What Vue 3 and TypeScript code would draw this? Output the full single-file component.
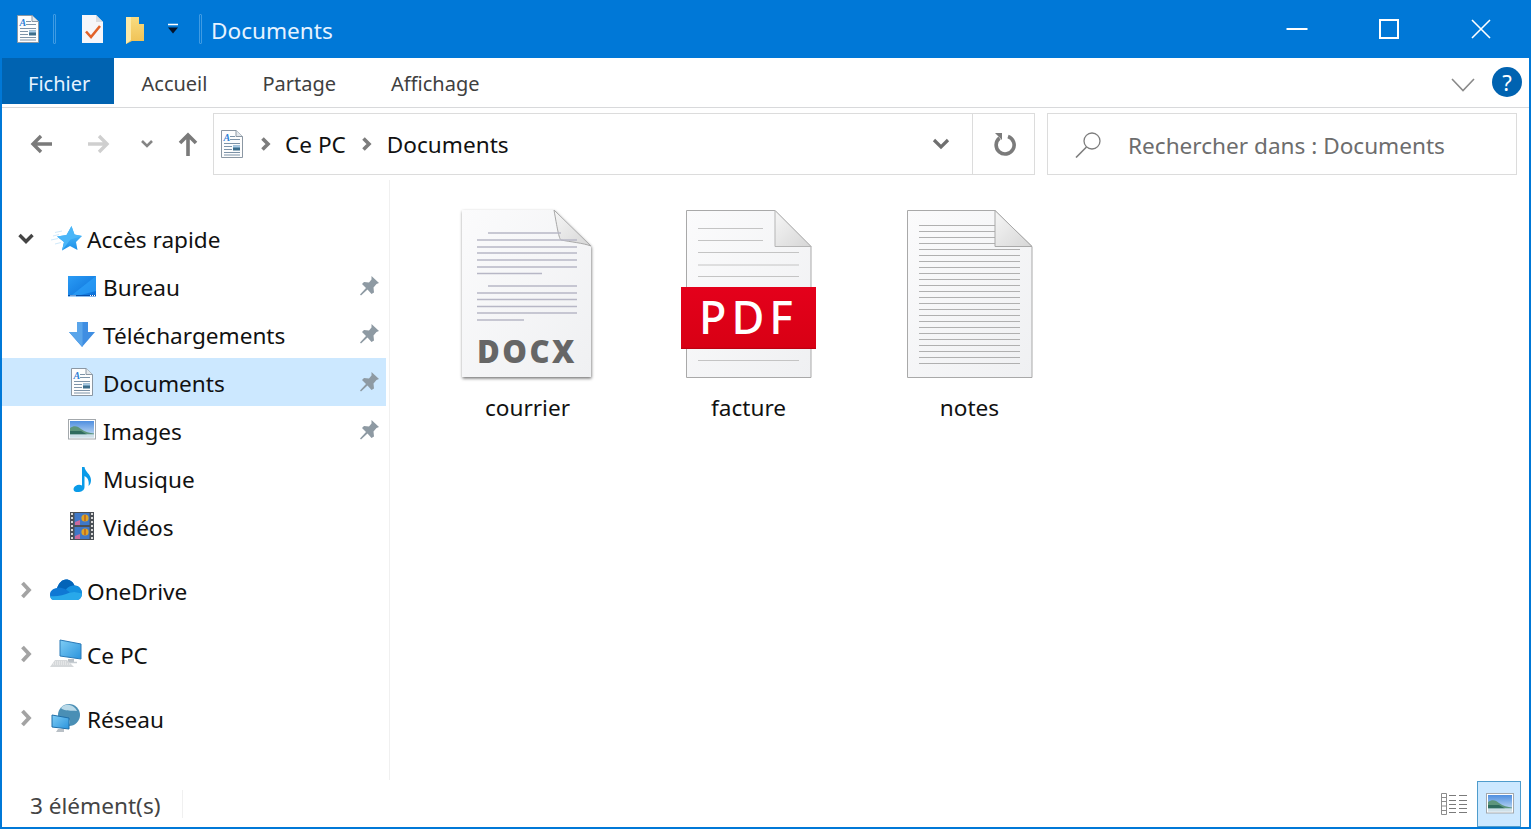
<script setup lang="ts">
interface TreeItem {
  label: string
  icon: string
  pinned?: boolean
  selected?: boolean
}

const quickAccess: TreeItem[] = [
  { label: 'Bureau', icon: 'i-desktop', pinned: true },
  { label: 'Téléchargements', icon: 'i-download', pinned: true },
  { label: 'Documents', icon: 'i-doc', pinned: true, selected: true },
  { label: 'Images', icon: 'i-picture', pinned: true },
  { label: 'Musique', icon: 'i-music' },
  { label: 'Vidéos', icon: 'i-video' },
]

const roots: TreeItem[] = [
  { label: 'OneDrive', icon: 'i-cloud' },
  { label: 'Ce PC', icon: 'i-pc' },
  { label: 'Réseau', icon: 'i-network' },
]

const tabs = ['Accueil', 'Partage', 'Affichage']

// ruled lines of the big file icons: [x1, x2, y]
const docxLines = [
  [30, 103, 28], [19, 119, 35], [19, 119, 42], [19, 119, 48], [19, 119, 55], [19, 119, 62], [19, 84, 68.5],
  [30, 119, 81], [19, 119, 88], [19, 119, 94.5], [19, 119, 101.5], [19, 119, 108], [19, 66, 115],
]
const pdfLines = [
  [19, 84, 23], [19, 84, 35], [19, 120, 47], [19, 120, 59.5], [19, 120, 71], [19, 120, 155],
]
const noteLines = Array.from({ length: 24 }, (_, i) => {
  return [19, i < 4 ? 95 : 120, 20 + i * 6]
})
</script>

<template>
  <div class="window">
    <!-- shared icons -->
    <svg class="defs" width="0" height="0" aria-hidden="true">
      <defs>
        <linearGradient id="g-star" x1="0" y1="0" x2="0" y2="1">
          <stop offset="0" stop-color="#5cc6ff" />
          <stop offset="1" stop-color="#1b8fe8" />
        </linearGradient>
        <linearGradient id="g-desk" x1="0" y1="0" x2="1" y2="1">
          <stop offset="0" stop-color="#2b9cf5" />
          <stop offset="1" stop-color="#0a6fd8" />
        </linearGradient>
        <linearGradient id="g-sky" x1="0" y1="0" x2="0" y2="1">
          <stop offset="0" stop-color="#4f8fe0" />
          <stop offset="1" stop-color="#cfe3f5" />
        </linearGradient>
        <linearGradient id="g-folder" x1="0" y1="0" x2="0" y2="1">
          <stop offset="0" stop-color="#f9dc80" />
          <stop offset="1" stop-color="#efc052" />
        </linearGradient>
        <linearGradient id="g-screen" x1="0" y1="0" x2="1" y2="1">
          <stop offset="0" stop-color="#7fcdf5" />
          <stop offset="1" stop-color="#2a93dc" />
        </linearGradient>
        <linearGradient id="g-page" x1="0" y1="0" x2="1" y2="1">
          <stop offset="0" stop-color="#fbfbfc" />
          <stop offset="1" stop-color="#eff0f2" />
        </linearGradient>
        <linearGradient id="g-fold" x1="0" y1="0" x2="1" y2="1">
          <stop offset="0" stop-color="#f6f6f6" />
          <stop offset="1" stop-color="#d6d6d6" />
        </linearGradient>
        <linearGradient id="g-red" x1="0" y1="0" x2="0" y2="1">
          <stop offset="0" stop-color="#e4001b" />
          <stop offset="0.97" stop-color="#d80014" />
          <stop offset="1" stop-color="#b5000f" />
        </linearGradient>
        <filter id="f-soft" x="-10%" y="-10%" width="120%" height="120%">
          <feDropShadow dx="0.5" dy="1.5" stdDeviation="1.5" flood-color="#000" flood-opacity="0.55" />
        </filter>

        <symbol id="i-doc" viewBox="0 0 30 30">
          <path d="M4.5 1.5H19L25.5 7.5V28.5H4.5Z" fill="#fdfdfd" stroke="#8b97a3" />
          <path d="M19 1.5V7.5H25.5" fill="#e4e8ec" stroke="#8b97a3" />
          <text x="6.5" y="11.5" class="doc-a">A</text>
          <path d="M13 7.5H18M13 10.5H23M7 14.5H23M7 17.5H15M7 20.5H15M7 23.5H23M7 26H23" stroke="#7d93a8" fill="none" />
          <rect x="16" y="16.5" width="7" height="5" fill="#3d6e8c" />
          <rect x="16" y="16.5" width="7" height="2" fill="#a9cbe6" />
        </symbol>

        <symbol id="i-check" viewBox="0 0 30 30">
          <path d="M4 1H18L25 8V29H4Z" fill="#f6f6fa" />
          <path d="M18 1V8H25Z" fill="#dadbe0" />
          <path d="M8 17.5L13 23L22 12" fill="none" stroke="#e2622a" stroke-width="2.6" />
        </symbol>

        <symbol id="i-qfolder" viewBox="0 0 30 30">
          <path d="M6 3H19V10H24V27H12L6 30Z" fill="url(#g-folder)" />
          <path d="M6 3H11V26L6 30Z" fill="#fbe9a8" />
        </symbol>

        <symbol id="i-star" viewBox="0 0 32 30">
          <path d="M1 17L8 15.5M3 13L9 11.5M5 9.5L12 8M5 21L11 19.5" stroke="#cfe9fa" fill="none" />
          <path d="M21.5 3L24.5 11.5L32 13L26 19L27.5 27L20 23L12 27.5L14 19L7 13.5L16.5 12Z" fill="url(#g-star)" />
          <path d="M21.5 3L24.5 11.5L32 13L20.5 16.5L12 27.5L14 19L7 13.5L16.5 12Z" fill="#4ab6f8" />
        </symbol>

        <symbol id="i-desktop" viewBox="0 0 30 30">
          <rect x="1" y="5" width="28" height="20.5" fill="url(#g-desk)" />
          <path d="M29 5V20L8 25.5H3Z" fill="#2ea3fa" opacity="0.65" />
          <path d="M1 24.5H29" stroke="#0a4fa8" />
          <path d="M3 25H9" stroke="#d7ecff" />
          <path d="M23 24.5H29" stroke="#fff" stroke-dasharray="1 1" />
        </symbol>

        <symbol id="i-download" viewBox="0 0 30 30">
          <path d="M10 3H21V13H28L15 28L2 13H10Z" fill="#3f8ee2" />
          <path d="M10 3H15.5V28L2 13H10Z" fill="#5aa5ea" />
        </symbol>

        <symbol id="i-picture" viewBox="0 0 30 30">
          <rect x="1.5" y="4.5" width="27" height="19.5" fill="#fff" stroke="#a3a8ac" />
          <rect x="3" y="6" width="24" height="16.5" fill="url(#g-sky)" />
          <path d="M3 13C7 10 11 11 14 14C18 17 23 18 27 18.5V19.5H3Z" fill="#5d957c" />
          <path d="M3 16H14L20 19.5H3Z" fill="#2f6b5e" />
          <path d="M3 19.5H27V22.5H3Z" fill="#cfe0e8" />
        </symbol>

        <symbol id="i-music" viewBox="0 0 30 30">
          <path d="M15 4H17.5C18 9 24 11 24 17C24 20 23 22 21.5 23C22 20 22 15 17.5 13V24C17.5 28 13 29.5 9.5 29C6 28.5 5.5 25 8.5 23C10.5 21.5 13 21.5 15 22.5Z" fill="#0a9be8" />
        </symbol>

        <symbol id="i-video" viewBox="0 0 30 30">
          <rect x="3" y="1" width="24" height="28" fill="#4a4f55" />
          <path d="M5 2V28M25 2V28" stroke="#d8d8d8" stroke-width="2" stroke-dasharray="2 2" />
          <rect x="7.5" y="2" width="15" height="12" fill="#3f78c8" />
          <rect x="7.5" y="16" width="15" height="12" fill="#3f78c8" />
          <circle cx="18" cy="7" r="3.6" fill="#e0a524" />
          <circle cx="18" cy="21" r="3.6" fill="#e0a524" />
          <path d="M8 11L13 9V14H8ZM8 25L13 23V28H8Z" fill="#c96a9e" />
          <path d="M18 4V10M18 18V24" stroke="#a8401c" />
        </symbol>

        <symbol id="i-cloud" viewBox="0 0 32 30">
          <path d="M4 25C1 25 0 22 0 19.5C0 16 3 13.5 7 13C9 8 12 4.5 16 4.5C20 4.5 23 7 24.5 10.5C28.5 10.5 32 14 32 18.5C32 22 30 25 27 25Z" fill="#0f78d4" />
          <path d="M7 13C9 8 12 4.5 16 4.5C20 4.5 23 7 24.5 10.5C21 10.5 18 12 16 14.5C13 13 10 12.5 7 13Z" fill="#0364b8" />
          <path d="M16 14.5C18 12 21 10.5 24.5 10.5C28.5 10.5 32 14 32 18.5C28 17 24 16.5 20 17.5Z" fill="#1490df" />
          <path d="M4 25C2 25 0.5 23.5 0.2 21C6 22 14 20 20 17.5C24 16.5 28 17 32 18.5C32 22 30 25 27 25Z" fill="#28a8ea" />
        </symbol>

        <symbol id="i-pc" viewBox="0 0 32 30">
          <path d="M10 1L31 5V20L10 17Z" fill="url(#g-screen)" stroke="#2a7ab8" />
          <path d="M18 20H24V24H18Z" fill="#b9c0c6" />
          <path d="M15 23.5H27" stroke="#c7cdd2" stroke-width="1.5" />
          <path d="M5 21H17L24 28H0Z" fill="#d5d8da" />
          <path d="M5 23H17M3 25H20" stroke="#f4f4f4" stroke-dasharray="1 1" />
        </symbol>

        <symbol id="i-network" viewBox="0 0 30 30">
          <circle cx="18" cy="12" r="11" fill="#4a8fb5" />
          <path d="M10 5C14 9 22 7 26 8C24 2 14 -1 10 5ZM14 15C18 14 20 18 18 22C15 22 13 18 14 15Z" fill="#b9d9e8" />
          <path d="M1 12L18 15V26L1 24Z" fill="url(#g-screen)" stroke="#1f6ea8" />
          <path d="M7 26H13V29H5Z" fill="#b9c0c6" />
        </symbol>

        <symbol id="i-pin" viewBox="0 0 22 22">
          <path d="M12.5 1L20 8L17.5 9L14.5 12.5L15 17.5L12.5 19L8.5 14.5L2 20.5L1 19.5L7 13L3 9L5 7L10 7.5L12.5 4.5Z" fill="#8e9aa3" />
        </symbol>

        <symbol id="i-refresh" viewBox="0 0 24 24">
          <path d="M7.5 6A9 9 0 1 0 16 4.5" fill="none" stroke="#7b7b7b" stroke-width="3.6" />
          <path d="M3 1H10V8Z" fill="#7b7b7b" />
        </symbol>
      </defs>
    </svg>

    <header class="titlebar">
      <svg class="tb-doc" width="30" height="30"><use href="#i-doc" /></svg>
      <span class="tb-sep tb-sep-a"></span>
      <svg class="tb-check" width="30" height="30"><use href="#i-check" /></svg>
      <svg class="tb-folder" width="30" height="30"><use href="#i-qfolder" /></svg>
      <svg class="tb-drop" width="12" height="12" viewBox="0 0 12 12">
        <path d="M1 1.5H11" stroke="#fff" stroke-width="1.5" />
        <path d="M1 4.5H11L6 10.5Z" fill="#04142c" />
      </svg>
      <span class="tb-sep tb-sep-b"></span>
      <span class="tb-title">Documents</span>
      <div class="win-ctrls">
        <button class="win-btn" type="button" aria-label="Réduire">
          <svg width="22" height="22" viewBox="0 0 22 22"><path d="M0.5 11H21.5" stroke="#fff" stroke-width="2" /></svg>
        </button>
        <button class="win-btn" type="button" aria-label="Agrandir">
          <svg width="20" height="20" viewBox="0 0 20 20"><rect x="1" y="1" width="18" height="18" fill="none" stroke="#fff" stroke-width="2" /></svg>
        </button>
        <button class="win-btn" type="button" aria-label="Fermer">
          <svg width="20" height="20" viewBox="0 0 20 20"><path d="M1 1L19 19M19 1L1 19" stroke="#fff" stroke-width="1.6" /></svg>
        </button>
      </div>
    </header>

    <nav class="ribbon">
      <div class="tab tab-file">Fichier</div>
      <div v-for="tab in tabs" :key="tab" class="tab">{{ tab }}</div>
      <svg class="ribbon-chev" width="24" height="14" viewBox="0 0 24 14">
        <path d="M1 1L12 12.5L23 1" fill="none" stroke="#8a8a8a" stroke-width="1.6" />
      </svg>
      <div class="help">?</div>
    </nav>

    <div class="addressrow">
      <svg class="nav-back" width="22" height="20" viewBox="0 0 22 20">
        <path d="M22 10H4M11 2L3 10L11 18" fill="none" stroke="#7a7a7a" stroke-width="3.4" />
      </svg>
      <svg class="nav-fwd" width="22" height="20" viewBox="0 0 22 20">
        <path d="M0 10H18M11 2L19 10L11 18" fill="none" stroke="#cfcfcf" stroke-width="3.4" />
      </svg>
      <svg class="nav-hist" width="12" height="10" viewBox="0 0 12 10">
        <path d="M1 2L6 7L11 2" fill="none" stroke="#858585" stroke-width="2.6" />
      </svg>
      <svg class="nav-up" width="20" height="24" viewBox="0 0 20 24">
        <path d="M10 24V4M2 11L10 3L18 11" fill="none" stroke="#7a7a7a" stroke-width="3.6" />
      </svg>

      <div class="addressbox">
        <svg class="ab-icon" width="30" height="30"><use href="#i-doc" /></svg>
        <svg class="crumb-chev crumb-chev-a" width="11" height="14" viewBox="0 0 11 14">
          <path d="M2.5 1.5L8 7L2.5 12.5" fill="none" stroke="#7c7c7c" stroke-width="3.6" />
        </svg>
        <span class="crumb">Ce PC</span>
        <svg class="crumb-chev crumb-chev-b" width="11" height="14" viewBox="0 0 11 14">
          <path d="M2.5 1.5L8 7L2.5 12.5" fill="none" stroke="#7c7c7c" stroke-width="3.6" />
        </svg>
        <span class="crumb">Documents</span>
        <svg class="ab-drop" width="18" height="12" viewBox="0 0 18 12">
          <path d="M2 2L9 9L16 2" fill="none" stroke="#6f6f6f" stroke-width="3.2" />
        </svg>
        <div class="ab-refresh">
          <svg width="24" height="24"><use href="#i-refresh" /></svg>
        </div>
      </div>

      <div class="searchbox">
        <svg width="27" height="27" viewBox="0 0 27 27">
          <circle cx="17" cy="10" r="8" fill="none" stroke="#7d7d7d" stroke-width="1.3" />
          <path d="M11.5 16L1 26.5" stroke="#7d7d7d" stroke-width="1.6" />
        </svg>
        <span class="search-text">Rechercher dans : Documents</span>
      </div>
    </div>

    <main class="body">
      <aside class="sidebar">
        <div class="row row-root">
          <svg class="exp" width="16" height="12" viewBox="0 0 16 12">
            <path d="M1.5 3L8 9.5L14.5 3" fill="none" stroke="#444" stroke-width="3.4" />
          </svg>
          <svg class="row-icon" width="32" height="30"><use href="#i-star" /></svg>
          <span class="row-label">Accès rapide</span>
        </div>
        <div
          v-for="item in quickAccess"
          :key="item.label"
          class="row row-child"
          :class="{ selected: item.selected }"
        >
          <svg class="row-icon" width="30" height="30"><use :href="`#${item.icon}`" /></svg>
          <span class="row-label">{{ item.label }}</span>
          <svg v-if="item.pinned" class="pin" width="22" height="22"><use href="#i-pin" /></svg>
        </div>
        <div v-for="item in roots" :key="item.label" class="row row-root row-group">
          <svg class="exp" width="16" height="18" viewBox="0 0 16 18">
            <path d="M4.5 2L11 9L4.5 16" fill="none" stroke="#a3a3a3" stroke-width="3.8" />
          </svg>
          <svg class="row-icon" width="32" height="30"><use :href="`#${item.icon}`" /></svg>
          <span class="row-label">{{ item.label }}</span>
        </div>
      </aside>

      <section class="files">
        <div class="file">
          <svg class="file-icon" width="140" height="180" viewBox="0 0 140 180">
            <path d="M4 5H96L133 41V172H4Z" fill="url(#g-page)" filter="url(#f-soft)" />
            <path d="M96 5C99 22 101 34 103 35C113 37 125 38 133 41Z" fill="url(#g-fold)" stroke="#a8a8a8" />
            <path
              v-for="(l, i) in docxLines"
              :key="i"
              :d="`M${l[0]} ${l[2]}H${l[1]}`"
              stroke="#b7b7c6"
              stroke-width="1.4"
            />
            <text x="19" y="158" class="docx-text">DOCX</text>
          </svg>
          <div class="file-name">courrier</div>
        </div>
        <div class="file">
          <svg class="file-icon" width="140" height="180" viewBox="0 0 140 180">
            <path d="M7.5 5.5H96L132 41.5V172.5H7.5Z" fill="url(#g-page)" stroke="#a9a9a9" />
            <path d="M96 5.5V41.5H132Z" fill="url(#g-fold)" stroke="#b5b5b5" />
            <path
              v-for="(l, i) in pdfLines"
              :key="i"
              :d="`M${l[0]} ${l[2] + 0.5}H${l[1]}`"
              stroke="#c4c4c4"
            />
            <rect x="2" y="82" width="135" height="62" fill="url(#g-red)" />
            <text x="20" y="129" class="pdf-text">PDF</text>
          </svg>
          <div class="file-name">facture</div>
        </div>
        <div class="file">
          <svg class="file-icon" width="140" height="180" viewBox="0 0 140 180">
            <path d="M7.5 5.5H95L132 41.5V172.5H7.5Z" fill="url(#g-page)" stroke="#a9a9a9" />
            <path
              v-for="(l, i) in noteLines"
              :key="i"
              :d="`M${l[0]} ${l[2] + 0.5}H${l[1]}`"
              stroke="#b0b0b0"
            />
            <path d="M95 5.5V41.5H132Z" fill="url(#g-fold)" stroke="#a9a9a9" />
          </svg>
          <div class="file-name">notes</div>
        </div>
      </section>
    </main>

    <footer class="statusbar">
      <span class="count">3 élément(s)</span>
      <span class="status-sep"></span>
      <svg class="view-details" width="28" height="24" viewBox="0 0 28 24">
        <path d="M1.5 1.5H6.5V22.5H1.5ZM1.5 5.5H6.5M1.5 9.5H6.5M1.5 14H6.5M1.5 18.5H6.5" fill="#fff" stroke="#8c8c8c" />
        <path d="M9 3.5H16M19 3.5H27M9 8.5H16M19 8.5H27M9 12.5H16M19 12.5H27M9 16.5H16M19 16.5H27M9 20.5H16M19 20.5H27" stroke="#7a7a7a" />
      </svg>
      <div class="view-large">
        <svg width="30" height="30"><use href="#i-picture" /></svg>
      </div>
    </footer>
  </div>
</template>

<style>
html,
body {
  margin: 0;
  background: #fff;
}
</style>

<style scoped>
.window {
  box-sizing: border-box;
  width: 1531px;
  height: 829px;
  display: flex;
  flex-direction: column;
  border: 2px solid #0078d7;
  border-top: 0;
  background: #fff;
  font-family: "Noto Sans", "Open Sans", sans-serif;
  font-size: 22.6px;
  color: #111;
  overflow: hidden;
}

.defs {
  position: absolute;
}

.doc-a {
  font-family: "Liberation Serif", serif;
  font-style: italic;
  font-weight: 700;
  font-size: 10px;
  fill: #2f7fd6;
}

.titlebar {
  display: flex;
  align-items: center;
  flex: none;
  height: 58px;
  margin: 0 -2px;
  padding-left: 13px;
  background: #0078d7;
  color: #e6f3ff;
}

.tb-sep {
  width: 1px;
  height: 28px;
  border: 1px solid #3f9be3;
  border-radius: 1px;
}

.tb-sep-a {
  margin-left: 10px;
}

.tb-check {
  margin-left: 22px;
}

.tb-folder {
  margin-left: 12px;
}

.tb-drop {
  margin-left: 17px;
}

.tb-sep-b {
  margin-left: 20px;
}

.tb-title {
  margin-left: 9px;
  padding-top: 2px;
}

.win-ctrls {
  display: flex;
  margin-left: auto;
  padding-right: 4px;
}

.win-btn {
  display: flex;
  align-items: center;
  justify-content: center;
  width: 92px;
  height: 58px;
  padding: 0;
  border: 0;
  background: none;
}

.ribbon {
  display: flex;
  flex: none;
  align-items: flex-start;
  box-sizing: border-box;
  height: 50px;
  border-bottom: 1px solid #d8d9db;
}

.tab {
  display: flex;
  align-items: center;
  box-sizing: border-box;
  height: 46px;
  padding: 4px 27.5px 0;
  color: #3f3f3f;
  font-size: 20px;
}

.tab-file {
  width: 112px;
  padding: 4px 0 0 26px;
  background: #0063b1;
  color: #e6f3ff;
}

.ribbon-chev {
  margin: 20px 0 0 auto;
}

.help {
  display: flex;
  align-items: center;
  justify-content: center;
  width: 30px;
  height: 30px;
  margin: 9px 7px 0 17px;
  border-radius: 50%;
  background: #0063b1;
  color: #fff;
  font-size: 22px;
}

.addressrow {
  display: flex;
  flex: none;
  align-items: center;
  box-sizing: border-box;
  height: 72px;
  padding: 5px 0 5px 28px;
}

.nav-fwd {
  margin-left: 36px;
}

.nav-hist {
  margin-left: 31px;
}

.nav-up {
  margin-left: 25px;
}

.addressbox {
  display: flex;
  align-items: center;
  box-sizing: border-box;
  width: 822px;
  height: 62px;
  margin-left: 15px;
  padding-left: 3px;
  border: 1px solid #dcdcdc;
}

.ab-icon {
  flex: none;
}

.crumb-chev-a {
  margin: 0 14px 0 13px;
}

.crumb-chev-b {
  margin: 0 15px;
}

.crumb {
  padding-top: 1px;
  color: #111;
}

.ab-drop {
  margin-left: auto;
}

.ab-refresh {
  display: flex;
  align-items: center;
  justify-content: center;
  width: 61px;
  height: 100%;
  margin-left: 22px;
  border-left: 1px solid #dcdcdc;
}

.searchbox {
  display: flex;
  align-items: center;
  box-sizing: border-box;
  width: 470px;
  height: 62px;
  margin-left: 12px;
  padding-left: 27px;
  border: 1px solid #dcdcdc;
}

.search-text {
  margin-left: 26px;
  padding-top: 2px;
  color: #6d6d6d;
}

.body {
  display: flex;
  flex: 1;
  min-height: 0;
}

.sidebar {
  flex: none;
  box-sizing: border-box;
  width: 388px;
  padding: 34px 3px 0 0;
  border-right: 1px solid #f0f0f0;
}

.row {
  display: flex;
  align-items: center;
  height: 48px;
}

.row-root {
  padding-left: 16px;
}

.row-child {
  padding-left: 65px;
}

.row-group {
  margin-top: 16px;
}

.selected {
  background: #cce8ff;
}

.exp {
  flex: none;
  width: 16px;
  margin-right: 16px;
}

.row-icon {
  flex: none;
}

.row-label {
  margin-left: 6px;
  padding-top: 2px;
}

.row-root .row-label {
  margin-left: 5px;
}

.pin {
  margin: 0 5px 0 auto;
}

.files {
  display: flex;
  align-items: flex-start;
  padding: 25px 0 0 27px;
}

.file {
  display: flex;
  flex-direction: column;
  align-items: center;
  width: 221px;
}

.file-icon {
  display: block;
}

.file-name {
  margin-top: 7px;
  line-height: 32px;
}

.docx-text {
  font-family: "Open Sans", sans-serif;
  font-weight: 800;
  font-size: 31px;
  letter-spacing: 2.5px;
  fill: #666;
}

.pdf-text {
  font-family: "Noto Sans", sans-serif;
  font-weight: 500;
  font-size: 45px;
  letter-spacing: 5px;
  fill: #fff;
}

.statusbar {
  display: flex;
  flex: none;
  align-items: center;
  height: 47px;
  padding-left: 28px;
  color: #444;
}

.count {
  padding-top: 4px;
}

.status-sep {
  width: 1px;
  height: 28px;
  margin-left: 22px;
  background: #f0f0f0;
}

.view-details {
  margin-left: auto;
}

.view-large {
  display: flex;
  align-items: center;
  justify-content: center;
  box-sizing: border-box;
  width: 44px;
  height: 46px;
  margin: 1px 8px 0 9px;
  padding-left: 2px;
  border: 1px solid #4f9ccc;
  background: #cce8ff;
}
</style>
